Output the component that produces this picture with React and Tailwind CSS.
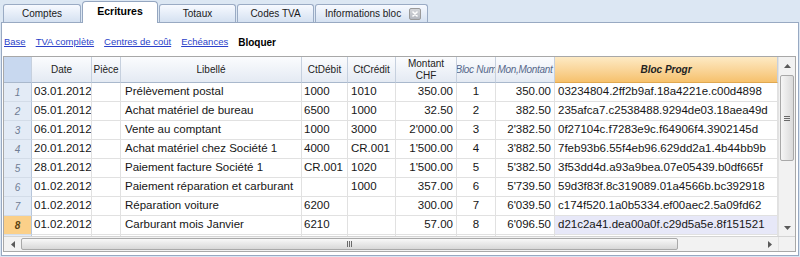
import React from 'react';

const tabs = [
  { label: 'Comptes', w: 'w-[78px]' },
  { label: 'Ecritures', w: 'w-[76px]', active: true },
  { label: 'Totaux', w: 'w-[77px]' },
  { label: 'Codes TVA', w: 'w-[77px]' },
  { label: 'Informations bloc', w: 'w-[113px]', close: true },
];

const links = ['Base', 'TVA complète', 'Centres de coût', 'Echéances'];

const rows = [
  ['03.01.2012', '', 'Prélèvement postal', '1000', '1010', '350.00', '1', '350.00', '03234804.2ff2b9af.18a4221e.c00d4898'],
  ['05.01.2012', '', 'Achat matériel de bureau', '6500', '1000', '32.50', '2', '382.50', '235afca7.c2538488.9294de03.18aea49d'],
  ['06.01.2012', '', 'Vente au comptant', '1000', '3000', "2'000.00", '3', "2'382.50", '0f27104c.f7283e9c.f64906f4.3902145d'],
  ['20.01.2012', '', 'Achat matériel chez Société 1', '4000', 'CR.001', "1'500.00", '4', "3'882.50", '7feb93b6.55f4eb96.629dd2a1.4b44bb9b'],
  ['28.01.2012', '', 'Paiement facture Société 1', 'CR.001', '1020', "1'500.00", '5', "5'382.50", '3f53dd4d.a93a9bea.07e05439.b0df665f'],
  ['01.02.2012', '', 'Paiement réparation et carburant', '', '1000', '357.00', '6', "5'739.50", '59d3f83f.8c319089.01a4566b.bc392918'],
  ['01.02.2012', '', 'Réparation voiture', '6200', '', '300.00', '7', "6'039.50", 'c174f520.1a0b5334.ef00aec2.5a09fd62'],
  ['01.02.2012', '', 'Carburant mois Janvier', '6210', '', '57.00', '8', "6'096.50", 'd21c2a41.dea00a0f.c29d5a5e.8f151521'],
];

// alignement des cellules par colonne
const align = ['pl-[2px]', 'pl-[3px]', 'pl-[4px]', 'pl-[2px]', 'pl-[3px]', 'justify-end pr-[3px]', 'justify-center', 'justify-end pr-[3px]', 'pl-[3px]'];

const cols = 'grid grid-cols-[28px_60px_29px_181px_46px_48px_61px_39px_59px_223px]';

const Arrow = ({ dir }) => {
  const pts = {
    up: '0,4 3.5,0 7,4',
    down: '0,0 3.5,4 7,0',
    left: '4,0 0,3.5 4,7',
    right: '0,0 4,3.5 0,7',
  }[dir];
  const vert = dir === 'up' || dir === 'down';
  return (
    <svg width={vert ? 7 : 4} height={vert ? 4 : 7} viewBox={vert ? '0 0 7 4' : '0 0 4 7'}>
      <polygon points={pts} fill="#5a5a5a" />
    </svg>
  );
};

const HeaderCell = ({ children, className = '' }) => (
  <div className={`h-[26px] flex items-center justify-center text-center leading-[12px] border-r border-b border-r-[#c6d0de] border-b-[#a9b8cc] bg-linear-to-b from-[#fbfcfe] to-[#e4eaf3] text-[10px] text-[#222] ${className}`}>
    {children}
  </div>
);

export default function App() {
  return (
    <div className="w-[800px] h-[257px] overflow-hidden bg-[#dce7f3] font-['Liberation_Sans',Arial,sans-serif]">
      {/* Onglets */}
      <div className="relative z-10 h-[22px] flex items-end gap-[1px] pl-[3px]">
        {tabs.map((t) =>
          t.active ? (
            <div key={t.label} className={`${t.w} h-[22px] -mb-px flex items-center justify-center rounded-t-[4px] border border-b-0 border-[#94a6c0] bg-white text-[10.5px] font-bold text-black pb-[2px]`}>
              {t.label}
            </div>
          ) : (
            <div key={t.label} className={`${t.w} h-[18px] flex items-center ${t.close ? 'justify-between pl-[9px] pr-[6px]' : 'justify-center'} rounded-t-[3px] border border-b-0 border-[#9aabc4] bg-linear-to-b from-[#f7faff] to-[#d5e1f1] text-[10px] text-[#1a1a1a]`}>
              <span>{t.label}</span>
              {t.close && (
                <span className="w-[12px] h-[12px] flex items-center justify-center rounded-[2px] border border-[#9a9a9a] bg-linear-to-b from-[#d4d6da] to-[#b4b8c0]">
                  <svg width="6" height="6" viewBox="0 0 6 6">
                    <path d="M1 1L5 5M5 1L1 5" stroke="#fff" strokeWidth="1.6" strokeLinecap="round" />
                  </svg>
                </span>
              )}
            </div>
          )
        )}
      </div>

      {/* Panneau */}
      <div className="mx-[1px] h-[234px] border border-[#98a9c2] bg-white px-[1px] flex flex-col">
        <div className="h-[33px] flex items-center gap-[10px] pl-[1px] pt-[6px] text-[9.5px]">
          {links.map((l) => (
            <a key={l} className="text-[#2b3fc9] underline underline-offset-[1px]">{l}</a>
          ))}
          <span className="font-bold text-[10px] text-black">Bloquer</span>
        </div>

        <div className="w-[793px] border border-[#a8a8a8] flex flex-col">
          <div className="flex">
            {/* Tableau */}
            <div className="w-[774px] h-[179px] overflow-hidden">
              <div className={cols}>
                <HeaderCell className="!bg-none bg-[#c8d8ef] border-r-[#a9b8cc]" />
                <HeaderCell>Date</HeaderCell>
                <HeaderCell>Pièce</HeaderCell>
                <HeaderCell>Libellé</HeaderCell>
                <HeaderCell>CtDébit</HeaderCell>
                <HeaderCell>CtCrédit</HeaderCell>
                <HeaderCell>Montant<br />CHF</HeaderCell>
                <HeaderCell className="italic text-[#56688a] tracking-[-0.3px] whitespace-nowrap overflow-hidden">Bloc Num</HeaderCell>
                <HeaderCell className="italic text-[#56688a] tracking-[-0.3px] whitespace-nowrap overflow-hidden">Mon,Montant</HeaderCell>
                <HeaderCell className="italic font-semibold text-[#4a4a4a] from-[#fdeac4] to-[#f6c16c] border-b-[#e0a850]">Bloc Progr</HeaderCell>
              </div>

              {rows.concat([Array(9).fill('')]).map((r, i) => {
                const current = i === 7;
                return (
                  <div key={i} className={`${cols} h-[19px]`}>
                    <div className={`flex items-center justify-center border-r border-b border-r-[#b6c5da] border-b-[#d3dce8] text-[10px] italic ${current ? 'bg-[#fbd089] text-[#5a4210] font-semibold' : 'bg-[#e3ebf6] text-[#6f7c94]'}`}>
                      {i < 8 ? i + 1 : ''}
                    </div>
                    {r.map((c, j) => (
                      <div
                        key={j}
                        className={`flex items-center whitespace-nowrap overflow-hidden border-r border-b border-[#e1e1e1] text-[11.5px] text-[#161616] ${align[j]} ${current && j === 8 ? 'bg-[#e7e8f8]' : ''}`}
                      >
                        {c}
                      </div>
                    ))}
                  </div>
                );
              })}
            </div>

            {/* Barre verticale */}
            <div className="w-[17px] h-[179px] flex flex-col bg-[#f2f2f2] border-l border-[#e2e2e2]">
              <div className="h-[17px] flex items-center justify-center"><Arrow dir="up" /></div>
              <div className="flex-1 px-[1px] pt-[1px]">
                <div className="h-[86px] rounded-[2px] border border-[#a9a9a9] bg-linear-to-r from-[#f6f6f6] to-[#dadada] flex items-center justify-center">
                  <svg width="6" height="5" viewBox="0 0 6 5">
                    <path d="M0 0.5H6M0 2.5H6M0 4.5H6" stroke="#6a6a6a" strokeWidth="1" />
                  </svg>
                </div>
              </div>
              <div className="h-[17px] flex items-center justify-center"><Arrow dir="down" /></div>
            </div>
          </div>

          {/* Barre horizontale */}
          <div className="flex h-[15px] border-t border-[#d4d4d4]">
            <div className="w-[774px] flex bg-[#f2f2f2]">
              <div className="w-[17px] flex items-center justify-center"><Arrow dir="left" /></div>
              <div className="w-[657px] my-[1px] rounded-[2px] border border-[#a9a9a9] bg-linear-to-b from-[#f8f8f8] to-[#d8d8d8] flex items-center justify-center">
                <svg width="5" height="6" viewBox="0 0 5 6">
                  <path d="M0.5 0V6M2.5 0V6M4.5 0V6" stroke="#6a6a6a" strokeWidth="1" />
                </svg>
              </div>
              <div className="flex-1" />
              <div className="w-[17px] flex items-center justify-center"><Arrow dir="right" /></div>
            </div>
            <div className="w-[17px] bg-[#f2f2f2] border-l border-[#e2e2e2]" />
          </div>
        </div>
      </div>
    </div>
  );
}
